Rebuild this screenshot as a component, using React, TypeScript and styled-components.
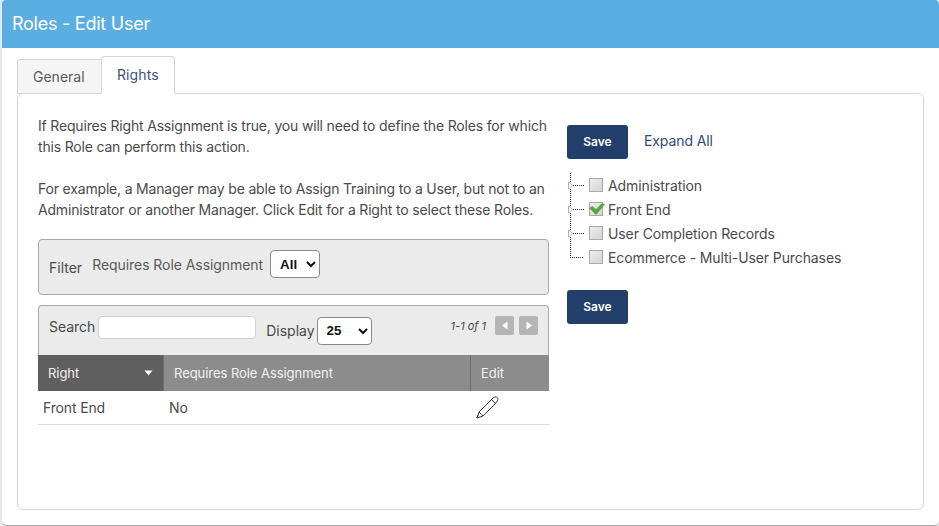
import React from 'react';
import styled, { createGlobalStyle } from 'styled-components';

const GlobalStyle = createGlobalStyle`
  html, body {
    margin: 0;
    padding: 0;
    height: 100%;
    background: #e4e8ec;
    overflow: hidden;
  }
  body {
    font-family: Inter, "Liberation Sans", sans-serif;
    font-size: 14px;
    color: #4a4a4a;
  }
`;

const Page = styled.div`
  width: 937px;
  height: 525px;
  margin-left: 2px;
  background: #fff;
  border-radius: 0 0 5px 5px;
  border-bottom: 1px solid #aaa;
  box-sizing: content-box;
  overflow: hidden;
`;

const TitleBar = styled.div`
  height: 48px;
  background: #5baee1;
  border-radius: 4px 4px 0 0;
  color: #fff;
  font-size: 18px;
  letter-spacing: -0.25px;
  line-height: 47px;
  padding-left: 10px;
`;

const Body = styled.div`
  padding: 8px 15px 0;
`;

const Tabs = styled.div`
  display: flex;
  align-items: flex-end;
  height: 38px;
  position: relative;
  z-index: 1;
  margin-bottom: -1px;
`;

const Tab = styled.div<{ $active?: boolean }>`
  box-sizing: border-box;
  height: ${(p) => (p.$active ? '38px' : '35px')};
  width: ${(p) => (p.$active ? '74px' : '85px')};
  padding: ${(p) => (p.$active ? '3px 0 0 15px' : '2px 0 0 15px')};
  line-height: 30px;
  font-size: 14px;
  letter-spacing: ${(p) => (p.$active ? '0.1px' : '0')};
  color: ${(p) => (p.$active ? '#3b5176' : '#5a5a5a')};
  background: ${(p) => (p.$active ? '#fff' : '#f5f5f5')};
  border: 1px solid #d6d6d6;
  border-bottom: ${(p) => (p.$active ? '1px solid #fff' : '1px solid #d6d6d6')};
  border-radius: ${(p) => (p.$active ? '4px 4px 0 0' : '3px 0 0 0')};
  margin-left: ${(p) => (p.$active ? '-1px' : '0')};
`;

const Panel = styled.div`
  box-sizing: border-box;
  width: 907px;
  height: 417px;
  border: 1px solid #d6d6d6;
  border-radius: 6px;
  padding: 21px 20px 0;
  display: flex;
`;

const LeftColumn = styled.div`
  width: 511px;
  flex: none;
`;

const Intro = styled.p`
  margin: 0;
  font-size: 14px;
  line-height: 21px;
  letter-spacing: -0.18px;
  color: #4a4a4a;
  & + & {
    margin-top: 21px;
  }
`;

const FilterBox = styled.div`
  box-sizing: border-box;
  height: 56px;
  margin-top: 19px;
  background: #ebebeb;
  border: 1px solid #a9a9a9;
  border-radius: 4px;
  display: flex;
  align-items: center;
  padding: 0 10px 6px;
`;

const FilterLabel = styled.span`
  font-size: 14px;
  margin-right: 10px;
  position: relative;
  top: 3px;
  color: #4a4a4a;
`;

const FieldLabel = styled.span`
  font-size: 14px;
  letter-spacing: -0.06px;
  color: #5a5a5a;
  margin-right: 7px;
`;

const NativeSelect = styled.select<{ $w: number }>`
  width: ${(p) => p.$w}px;
  height: 28px;
  box-sizing: border-box;
  background: #fff;
  border: 1px solid #8a8a8a;
  border-radius: 4px;
  font-family: "Liberation Sans", Arial, sans-serif;
  font-size: 13.3px;
  font-weight: 700;
  color: #111;
  padding: 0 0 0 5px;
`;

const GridBox = styled.div`
  margin-top: 10px;
`;

const GridToolbar = styled.div`
  box-sizing: border-box;
  height: 50px;
  background: #ebebeb;
  border: 1px solid #a9a9a9;
  border-bottom: none;
  border-radius: 4px 4px 0 0;
  display: flex;
  align-items: center;
  padding: 0 10px;
  font-size: 14px;
  color: #4a4a4a;
`;

const SearchInput = styled.input`
  box-sizing: border-box;
  width: 158px;
  height: 23px;
  margin: 0 10px 7px 2px;
  background: #fff;
  border: 1px solid #cfcfcf;
  border-radius: 4px;
`;

const ToolbarLabel = styled.span<{ $up?: boolean }>`
  position: relative;
  top: ${(p) => (p.$up ? '-4px' : '0')};
  margin-right: ${(p) => (p.$up ? '1px' : '2px')};
  letter-spacing: ${(p) => (p.$up ? '-0.05px' : '0')};
`;

const Pager = styled.div`
  margin-left: auto;
  display: flex;
  align-items: center;
  gap: 5px;
  position: relative;
  top: -5px;
  font-size: 11px;
  font-style: italic;
  color: #4a4a4a;
`;

const PagerButton = styled.span`
  width: 19px;
  height: 19px;
  background: #b5b5b5;
  border-radius: 2px;
  display: flex;
  align-items: center;
  justify-content: center;
`;

const PagerText = styled.span`
  margin-right: 4px;
`;

const Table = styled.table`
  width: 100%;
  border-collapse: collapse;
  table-layout: fixed;
`;

const HeadCell = styled.th<{ $sorted?: boolean; $w?: number }>`
  box-sizing: border-box;
  width: ${(p) => (p.$w ? `${p.$w}px` : 'auto')};
  height: 36px;
  padding: 0 10px;
  background: ${(p) => (p.$sorted ? '#5f5f5f' : '#8c8c8c')};
  color: #f2f2f2;
  font-size: 13px;
  font-weight: 400;
  text-align: left;
  letter-spacing: -0.05px;
  & + & {
    border-left: 1px solid #6e6e6e;
    padding-left: 10.5px;
  }
`;

const HeadInner = styled.div`
  display: flex;
  align-items: center;
  justify-content: space-between;
`;

const BodyCell = styled.td<{ $pad?: number }>`
  box-sizing: border-box;
  height: 33px;
  padding: 0 0 0 ${(p) => p.$pad ?? 5}px;
  border-bottom: 1px solid #dcdcdc;
  font-size: 14px;
  letter-spacing: -0.15px;
  color: #4a4a4a;
`;

const RightColumn = styled.div`
  margin-left: 18px;
  padding-top: 10px;
`;

const SaveRow = styled.div`
  display: flex;
  align-items: center;
  gap: 16px;
`;

const SaveButton = styled.button`
  display: block;
  box-sizing: border-box;
  width: 61px;
  height: 34px;
  border: none;
  border-radius: 3px;
  background: #223f6b;
  color: #fff;
  font-family: Inter, "Liberation Sans", sans-serif;
  font-size: 12px;
  font-weight: 600;
  padding: 0 0 1px;
`;

const ExpandLink = styled.a`
  font-size: 14px;
  letter-spacing: -0.1px;
  color: #2f4a78;
  position: relative;
  top: -2px;
`;

const Tree = styled.ul`
  list-style: none;
  margin: 14px 0 21px;
  padding: 0;
`;

const TreeRow = styled.li`
  display: flex;
  align-items: center;
  height: 24px;
  font-size: 14px;
  letter-spacing: -0.1px;
  color: #4a4a4a;
`;

const Connector = styled.svg`
  width: 22px;
  height: 24px;
  flex: none;
`;

const CheckSquare = styled.span`
  position: relative;
  box-sizing: border-box;
  width: 14px;
  height: 14px;
  margin-right: 5px;
  flex: none;
  border: 1px solid #aaa;
  background: linear-gradient(135deg, #eeeeee, #d4d4d4);
`;

const CheckMark = styled.svg`
  position: absolute;
  left: -1px;
  top: -2px;
  width: 16px;
  height: 16px;
`;

const TreeLine = ({ last, arrow }: { last?: boolean; arrow?: boolean }) => (
  <Connector viewBox="0 0 22 24" shapeRendering="crispEdges">
    <path
      d={last ? 'M3.5 0V12.5H17' : 'M3.5 0V24M3.5 12.5H17'}
      fill="none"
      stroke="#333"
      strokeWidth="1"
      strokeDasharray="1 1"
    />
    {arrow && (
      <path d="M1.5 8.5L5.5 12.5L1.5 16.5Z" fill="#fff" stroke="#b5b5b5" strokeWidth="1" shapeRendering="auto" />
    )}
  </Connector>
);

const TreeItem = ({
  label,
  checked,
  last,
}: {
  label: string;
  checked?: boolean;
  last?: boolean;
}) => (
  <TreeRow>
    <TreeLine last={last} arrow={!last} />
    <CheckSquare>
      {checked && (
        <CheckMark viewBox="0 0 16 16">
          <path
            d="M0.5 7L3.5 5.5L7 8.5L13 2.5L15.5 3.5L7 13.5Z"
            fill="#55a839"
            stroke="#3d8a2a"
            strokeWidth="0.5"
          />
        </CheckMark>
      )}
    </CheckSquare>
    {label}
  </TreeRow>
);

const PagerArrow = ({ left }: { left?: boolean }) => (
  <PagerButton>
    <svg width="8" height="9" viewBox="0 0 8 9">
      <path d={left ? 'M6.5 0.5V8.5L1 4.5Z' : 'M1.5 0.5V8.5L7 4.5Z'} fill="#fff" />
    </svg>
  </PagerButton>
);

const PencilIcon = styled.svg`
  display: block;
`;

export default function App() {
  return (
    <>
      <GlobalStyle />
      <Page>
        <TitleBar>Roles - Edit User</TitleBar>
        <Body>
          <Tabs>
            <Tab>General</Tab>
            <Tab $active>Rights</Tab>
          </Tabs>
          <Panel>
            <LeftColumn>
              <Intro>
                If Requires Right Assignment is true, you will need to define the Roles for which
                this Role can perform this action.
              </Intro>
              <Intro>
                For example, a Manager may be able to Assign Training to a User, but not to an
                Administrator or another Manager. Click Edit for a Right to select these Roles.
              </Intro>
              <FilterBox>
                <FilterLabel>Filter</FilterLabel>
                <FieldLabel>Requires Role Assignment</FieldLabel>
                <NativeSelect $w={50} defaultValue="All">
                  <option>All</option>
                </NativeSelect>
              </FilterBox>
              <GridBox>
                <GridToolbar>
                  <ToolbarLabel $up>Search</ToolbarLabel>
                  <SearchInput />
                  <ToolbarLabel>Display</ToolbarLabel>
                  <NativeSelect $w={55} defaultValue="25">
                    <option>25</option>
                  </NativeSelect>
                  <Pager>
                    <PagerText>1-1 of 1</PagerText>
                    <PagerArrow left />
                    <PagerArrow />
                  </Pager>
                </GridToolbar>
                <Table>
                  <thead>
                    <tr>
                      <HeadCell $sorted $w={125}>
                        <HeadInner>
                          Right
                          <svg width="9" height="6" viewBox="0 0 9 6">
                            <path d="M0.5 0.5H8.5L4.5 5.5Z" fill="#fff" />
                          </svg>
                        </HeadInner>
                      </HeadCell>
                      <HeadCell>Requires Role Assignment</HeadCell>
                      <HeadCell $w={79}>Edit</HeadCell>
                    </tr>
                  </thead>
                  <tbody>
                    <tr>
                      <BodyCell>Front End</BodyCell>
                      <BodyCell $pad={6}>No</BodyCell>
                      <BodyCell $pad={6}>
                        <PencilIcon width="23" height="23" viewBox="0 0 23 23" fill="none" stroke="#222" strokeWidth="0.9">
                          <path d="M1 22L3 16L15.5 3.5L19.5 7.5L7 20Z" />
                          <path d="M3 16L7 20M1 22L2 19" />
                          <path d="M17 2C18 1 19.5 0.7 20.8 1.2C22 2 22.4 3.5 21.6 4.6L19.5 7.5L15.5 3.5Z" />
                        </PencilIcon>
                      </BodyCell>
                    </tr>
                  </tbody>
                </Table>
              </GridBox>
            </LeftColumn>
            <RightColumn>
              <SaveRow>
                <SaveButton>Save</SaveButton>
                <ExpandLink>Expand All</ExpandLink>
              </SaveRow>
              <Tree>
                <TreeItem label="Administration" />
                <TreeItem label="Front End" checked />
                <TreeItem label="User Completion Records" />
                <TreeItem label="Ecommerce - Multi-User Purchases" last />
              </Tree>
              <SaveButton>Save</SaveButton>
            </RightColumn>
          </Panel>
        </Body>
      </Page>
    </>
  );
}
